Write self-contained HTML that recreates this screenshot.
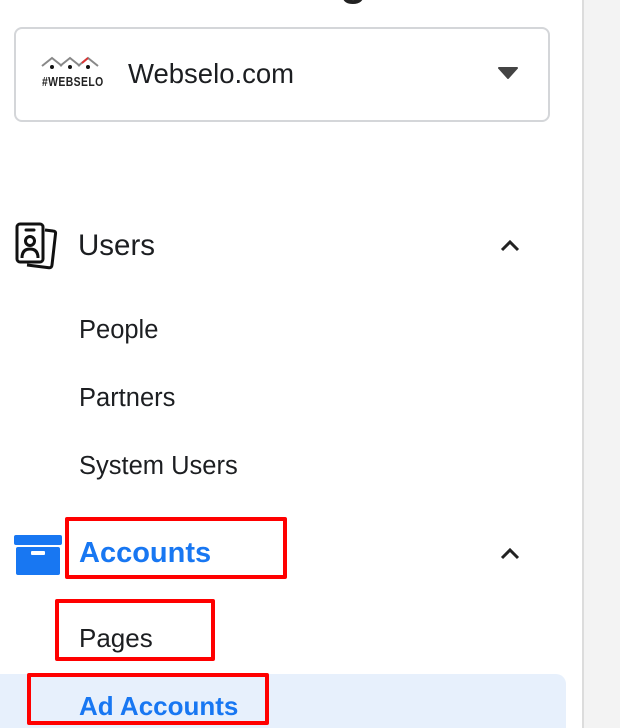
<!DOCTYPE html>
<html><head><meta charset="utf-8"><style>
*{margin:0;padding:0;box-sizing:border-box}
html,body{width:620px;height:728px;overflow:hidden}
body{background:#fff;font-family:"Liberation Sans",Arial,sans-serif;position:relative;color:#1c1e21}
.abs{position:absolute}
.right{left:582px;top:0;width:38px;height:728px;background:#f3f3f3;border-left:2px solid #dcdcdc}
.box{left:14px;top:27px;width:536px;height:95px;border:2px solid #d4d6d9;border-radius:8px}
.t{position:absolute;white-space:nowrap}
.red{position:absolute;border:4px solid #f00;border-radius:2px}
</style></head><body>
<div class="abs right"></div>
<div class="t" style="left:340px;top:-44px;font-size:44px;font-weight:bold;color:#222">g</div>
<div class="abs box"></div>
<svg class="abs" style="left:40px;top:52px" width="62" height="46" viewBox="0 0 62 46">
<path d="M2 14 L12 6 L22 14 M20 14 L30 6 L40 14 M38 14 L48 6 L58 14" fill="none" stroke="#888" stroke-width="2"/>
<path d="M42 11 L48 6" stroke="#d33" stroke-width="2"/>
<circle cx="12" cy="15" r="2" fill="#111"/><circle cx="30" cy="15" r="2" fill="#111"/><circle cx="48" cy="15" r="2" fill="#111"/>
</svg>
<div class="t" style="left:42px;top:74px;font-size:13px;font-weight:bold;color:#222;transform:scaleX(0.8);transform-origin:left;letter-spacing:0.5px">#WEBSELO</div>
<div class="t" style="left:128px;top:58px;font-size:27.5px">Webselo.com</div>
<svg class="abs" style="left:498px;top:67px" width="20" height="12"><path d="M1 1 L19 1 L10 11Z" fill="#444" stroke="#444" stroke-linejoin="round" stroke-width="2"/></svg>

<svg class="abs" style="left:14px;top:221px" width="46" height="50" viewBox="0 0 46 50">
<rect x="3" y="3" width="26" height="38" rx="3" fill="none" stroke="#111" stroke-width="3"/>
<path d="M31 9 L39 10 Q42 10 41.5 13 L38 44 Q37.7 47 35 46.7 L13 44" fill="none" stroke="#111" stroke-width="3"/>
<path d="M12 9 L20 9" stroke="#111" stroke-width="3" stroke-linecap="round"/>
<circle cx="16" cy="20" r="4.5" fill="none" stroke="#111" stroke-width="3"/>
<path d="M8 37 Q8 28 16 28 Q24 28 24 37" fill="none" stroke="#111" stroke-width="3"/>
</svg>
<div class="t" style="left:78px;top:229px;font-size:29.5px">Users</div>
<svg class="abs" style="left:499px;top:238px" width="22" height="14"><path d="M3 12 L11 4 L19 12" fill="none" stroke="#222" stroke-width="3"/></svg>
<div class="t" style="left:79px;top:316px;font-size:25.5px">People</div>
<div class="t" style="left:79px;top:384px;font-size:25.5px">Partners</div>
<div class="t" style="left:79px;top:452px;font-size:25.5px">System Users</div>

<svg class="abs" style="left:13px;top:535px" width="50" height="40" viewBox="0 0 50 40">
<rect x="1" y="0" width="48" height="10" rx="2" fill="#1877f2"/>
<rect x="3" y="12" width="44" height="28" rx="2" fill="#1877f2"/>
<rect x="18" y="16" width="14" height="4" rx="1" fill="#fff"/>
</svg>
<div class="t" style="left:79px;top:537px;font-size:29px;font-weight:bold;color:#1877f2">Accounts</div>
<svg class="abs" style="left:499px;top:546px" width="22" height="14"><path d="M3 12 L11 4 L19 12" fill="none" stroke="#222" stroke-width="3"/></svg>
<div class="red" style="left:65px;top:517px;width:222px;height:62px"></div>
<div class="t" style="left:79px;top:623px;font-size:26px">Pages</div>
<div class="red" style="left:55px;top:599px;width:160px;height:62px"></div>
<div class="abs" style="left:0;top:674px;width:566px;height:60px;background:#e7f0fc;border-radius:0 10px 0 0"></div>
<div class="t" style="left:79px;top:691px;font-size:26px;font-weight:bold;color:#1877f2">Ad Accounts</div>
<div class="red" style="left:27px;top:673px;width:242px;height:52px"></div>
</body></html>
